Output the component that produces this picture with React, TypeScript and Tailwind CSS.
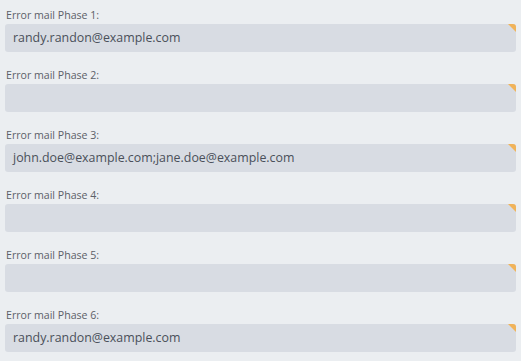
import React from "react";

const fields = [
  { label: "Error mail Phase 1:", value: "randy.randon@example.com" },
  { label: "Error mail Phase 2:", value: "" },
  { label: "Error mail Phase 3:", value: "john.doe@example.com;jane.doe@example.com" },
  { label: "Error mail Phase 4:", value: "" },
  { label: "Error mail Phase 5:", value: "" },
  { label: "Error mail Phase 6:", value: "randy.randon@example.com" },
];

const Field = ({ label, value }: { label: string; value: string }) => {
  return (
    <div className="flex flex-col">
      <div className="h-[20px] flex items-center pt-[2px] pl-[1px] text-[10.6px] leading-none text-[#5b6068]">
        {label}
      </div>
      <div className="relative h-[28px] rounded-[3px] bg-[#d8dce3] flex items-center px-[8px] text-[12.4px] text-[#4a505a]">
        {value}
        <div className="absolute top-0 right-0 w-0 h-0 border-t-[8px] border-l-[8px] border-t-[#f0b35a] border-l-transparent rounded-tr-[3px]" />
      </div>
    </div>
  );
};

export default function App() {
  return (
    <div
      className="w-[521px] h-[361px] bg-[#ebeef1] px-[5px] pt-[4px] flex flex-col gap-[12px]"
      style={{ fontFamily: '"Open Sans", "Noto Sans", sans-serif' }}
    >
      {fields.map((f) => (
        <Field key={f.label} label={f.label} value={f.value} />
      ))}
    </div>
  );
}
